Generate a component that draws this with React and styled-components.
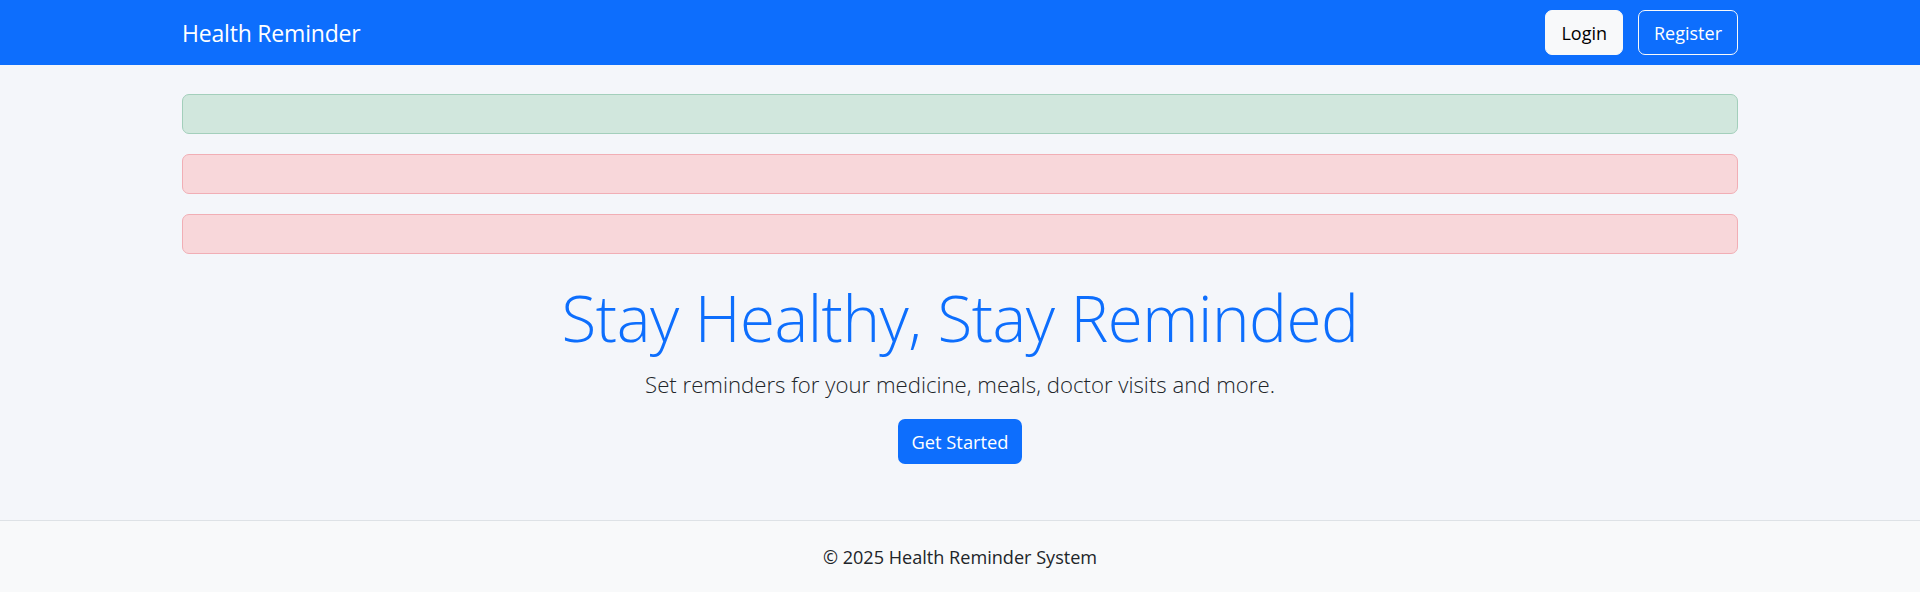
import React from "react";
import styled, { createGlobalStyle } from "styled-components";

const GlobalStyle = createGlobalStyle`
  html, body {
    margin: 0;
    padding: 0;
  }
  body {
    font-family: "Open Sans", "Noto Sans", sans-serif;
    background: #f4f6fa;
    color: #212529;
  }
`;

const Page = styled.div`
  min-height: 100vh;
  display: flex;
  flex-direction: column;
`;

const Navbar = styled.nav`
  background: #0d6efd;
  height: 65px;
  display: flex;
  align-items: center;
`;

const Container = styled.div`
  width: 100%;
  box-sizing: border-box;
  padding: 0 182px;
`;

const NavInner = styled(Container)`
  display: flex;
  align-items: center;
  justify-content: space-between;
`;

const Brand = styled.a`
  color: #fff;
  font-size: 23px;
  text-decoration: none;
  letter-spacing: -0.2px;
`;

const NavActions = styled.div`
  display: flex;
  gap: 15px;
`;

const NavButton = styled.a`
  box-sizing: border-box;
  height: 45px;
  padding: 0 ${(p) => p.$px}px;
  display: inline-flex;
  align-items: center;
  justify-content: center;
  border-radius: 7px;
  font-size: 18px;
  text-decoration: none;
  border: 1px solid #f8f9fa;
  background: ${(p) => (p.$outline ? "transparent" : "#f8f9fa")};
  color: ${(p) => (p.$outline ? "#fff" : "#000")};
`;

const Main = styled(Container)`
  padding-top: 29px;
`;

const Alert = styled.div`
  box-sizing: border-box;
  height: 40px;
  margin-bottom: 20px;
  border-radius: 7px;
  border: 1px solid ${(p) => (p.$variant === "success" ? "#a3cfbb" : "#f1aeb5")};
  background: ${(p) => (p.$variant === "success" ? "#d1e7dd" : "#f8d7da")};
`;

const Hero = styled.section`
  text-align: center;
  padding-top: 6px;
`;

const Title = styled.h1`
  margin: 0;
  font-size: 63.7px;
  font-weight: 300;
  line-height: 1.2;
  color: #0d6efd;
  letter-spacing: -0.5px;
`;

const Lead = styled.p`
  margin: 13px 0 0;
  font-size: 22.2px;
  font-weight: 300;
  color: #212529;
`;

const PrimaryButton = styled.a`
  box-sizing: border-box;
  margin-top: 19px;
  height: 45px;
  padding: 0 14px;
  display: inline-flex;
  align-items: center;
  border-radius: 7px;
  background: #0d6efd;
  color: #fff;
  font-size: 18.3px;
  text-decoration: none;
`;

const Footer = styled.footer`
  margin-top: auto;
  background: #f8f9fa;
  border-top: 1px solid #dee2e6;
  height: 71px;
  display: flex;
  align-items: center;
  justify-content: center;
  font-size: 18.1px;
  color: #212529;
`;

const App = () => {
  return (
    <Page>
      <GlobalStyle />
      <Navbar>
        <NavInner>
          <Brand href="#">Health Reminder</Brand>
          <NavActions>
            <NavButton href="#" $px={15}>
              Login
            </NavButton>
            <NavButton href="#" $outline $px={15}>
              Register
            </NavButton>
          </NavActions>
        </NavInner>
      </Navbar>

      <Main>
        <Alert $variant="success" />
        <Alert $variant="danger" />
        <Alert $variant="danger" />

        <Hero>
          <Title>Stay Healthy, Stay Reminded</Title>
          <Lead>Set reminders for your medicine, meals, doctor visits and more.</Lead>
          <PrimaryButton href="#">Get Started</PrimaryButton>
        </Hero>
      </Main>

      <Footer>© 2025 Health Reminder System</Footer>
    </Page>
  );
};

export default App;
